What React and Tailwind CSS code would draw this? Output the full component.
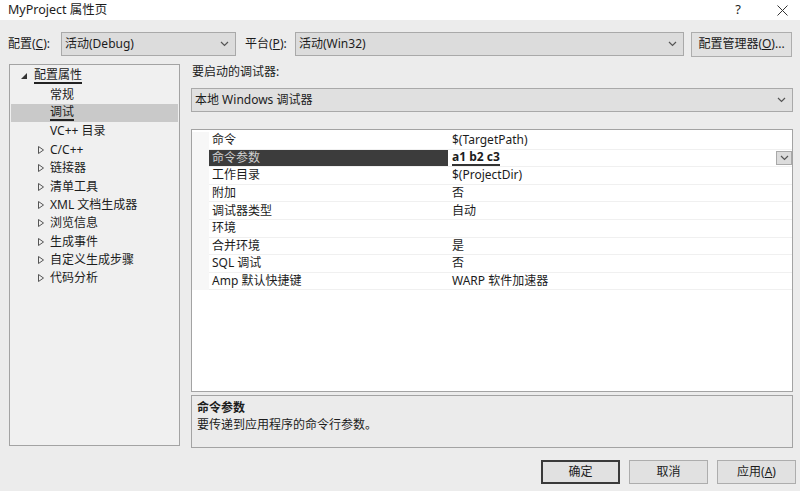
import React from 'react'

const font = { fontFamily: '"Noto Sans", "Noto Sans CJK SC", sans-serif' }

const tree = [
  { label: 'C/C++' },
  { label: '链接器' },
  { label: '清单工具' },
  { label: 'XML 文档生成器' },
  { label: '浏览信息' },
  { label: '生成事件' },
  { label: '自定义生成步骤' },
  { label: '代码分析' },
]

const rows = [
  ['命令', '$(TargetPath)'],
  ['命令参数', 'a1 b2 c3'],
  ['工作目录', '$(ProjectDir)'],
  ['附加', '否'],
  ['调试器类型', '自动'],
  ['环境', ''],
  ['合并环境', '是'],
  ['SQL 调试', '否'],
  ['Amp 默认快捷键', 'WARP 软件加速器'],
]

function Chevron({ className = '' }) {
  return (
    <svg width="9" height="6" viewBox="0 0 9 6" className={className}>
      <path d="M1 1 L4.5 4.5 L8 1" fill="none" stroke="#555" strokeWidth="1.2" />
    </svg>
  )
}

function Combo({ text, className = '' }) {
  return (
    <div className={`flex items-center justify-between h-[24px] bg-[#dcdcdc] border border-[#a9a9a9] pl-[3px] pr-[6px] ${className}`}>
      <span>{text}</span>
      <Chevron />
    </div>
  )
}

function Button({ children, primary }) {
  return (
    <div className={`w-[79px] h-[24px] flex items-center justify-center bg-[#e1e1e1] ${primary ? 'border-2 border-[#3a3a3a]' : 'border border-[#adadad]'}`}>
      {children}
    </div>
  )
}

export default function App() {
  return (
    <div style={font} className="w-[800px] h-[491px] bg-[#ececec] text-[12px] text-[#1c1c1c] flex flex-col overflow-hidden">
      {/* title bar */}
      <div className="h-[20px] bg-white flex items-center justify-between pl-[8px] pr-[12px]">
        <span className="text-[12.5px]">MyProject 属性页</span>
        <div className="flex items-center gap-[36px] text-[13px]">
          <span>?</span>
          <svg width="11" height="11" viewBox="0 0 11 11">
            <path d="M0.5 0.5 L10.5 10.5 M10.5 0.5 L0.5 10.5" stroke="#333" strokeWidth="1" />
          </svg>
        </div>
      </div>

      {/* config row */}
      <div className="mt-[12px] flex items-center pl-[8px] h-[24px]">
        <span className="w-[53px]">配置(<span className="underline">C</span>):</span>
        <Combo text="活动(Debug)" className="w-[175px]" />
        <span className="ml-[9px] w-[50px]">平台(<span className="underline">P</span>):</span>
        <Combo text="活动(Win32)" className="w-[389px]" />
        <div className="ml-[7px] w-[101px] h-[25px] flex items-center justify-center bg-[#e1e1e1] border border-[#adadad]">
          配置管理器(<span className="underline">O</span>)...
        </div>
      </div>

      {/* main area */}
      <div className="mt-[8px] flex pl-[9px]">
        <div className="w-[171px] h-[382px] bg-[#f0f0f0] border border-[#a3a3a3] pt-[2px] flex flex-col">
          <div className="h-[18.4px] flex items-center pl-[11px]">
            <svg width="6" height="6" viewBox="0 0 6 6" className="mr-[7px]">
              <path d="M6 0 L6 6 L0 6 Z" fill="#333" />
            </svg>
            <span className="border-b-2 border-[#222] leading-[14px]">配置属性</span>
          </div>
          <div className="h-[18.4px] flex items-center pl-[40px]">常规</div>
          <div className="h-[18.4px] flex items-center pl-[40px] bg-[#c9c9c9] mx-[1px]">
            <span className="border-b-2 border-[#222] leading-[14px] -ml-[1px]">调试</span>
          </div>
          <div className="h-[18.4px] flex items-center pl-[40px]">VC++ 目录</div>
          {tree.map((t) => (
            <div key={t.label} className="h-[18.4px] flex items-center pl-[28px]">
              <svg width="6" height="8" viewBox="0 0 6 8" className="mr-[6px]">
                <path d="M0.5 0.5 L5.5 4 L0.5 7.5 Z" fill="none" stroke="#555" strokeWidth="1" />
              </svg>
              <span>{t.label}</span>
            </div>
          ))}
        </div>

        <div className="ml-[11px] w-[602px] flex flex-col">
          <div className="h-[16px] flex items-center pl-[1px]">要启动的调试器:</div>
          <Combo text="本地 Windows 调试器" className="mt-[8px] h-[23px] bg-[#e0e0e0]" />

          {/* property grid */}
          <div className="mt-[17px] h-[263px] bg-white border border-[#a3a3a3] pt-[2px] flex flex-col">
            {rows.map(([k, v], i) => {
              const sel = i === 1
              return (
                <div key={k} className="flex h-[17.6px]">
                  <div className="w-[17px] bg-[#f7f7f7]" />
                  <div className={`w-[239px] flex items-center pl-[3px] border-b border-[#f0f0f0] ${sel ? 'bg-[#3c3c3c] text-[#d0d0d0]' : ''}`}>
                    {k}
                  </div>
                  <div className="flex-1 flex items-center justify-between pl-[4px] border-b border-[#f0f0f0]">
                    {sel ? (
                      <span className="font-bold border-b-2 border-[#333] leading-[14px]">{v}</span>
                    ) : (
                      <span>{v}</span>
                    )}
                    {sel && (
                      <div className="w-[16px] h-[14px] bg-[#dcdcdc] border border-[#a9a9a9] flex items-center justify-center">
                        <Chevron />
                      </div>
                    )}
                  </div>
                </div>
              )
            })}
          </div>

          {/* description */}
          <div className="mt-[3px] h-[53px] bg-[#ebebeb] border border-[#a3a3a3] px-[5px] pt-[3px]">
            <div className="font-bold leading-[17px]">命令参数</div>
            <div className="leading-[17px]">要传递到应用程序的命令行参数。</div>
          </div>
        </div>
      </div>

      {/* buttons */}
      <div className="mt-[12px] flex justify-end gap-[9px] pr-[4px]">
        <Button primary>确定</Button>
        <Button>取消</Button>
        <Button>应用(<span className="underline">A</span>)</Button>
      </div>
    </div>
  )
}
